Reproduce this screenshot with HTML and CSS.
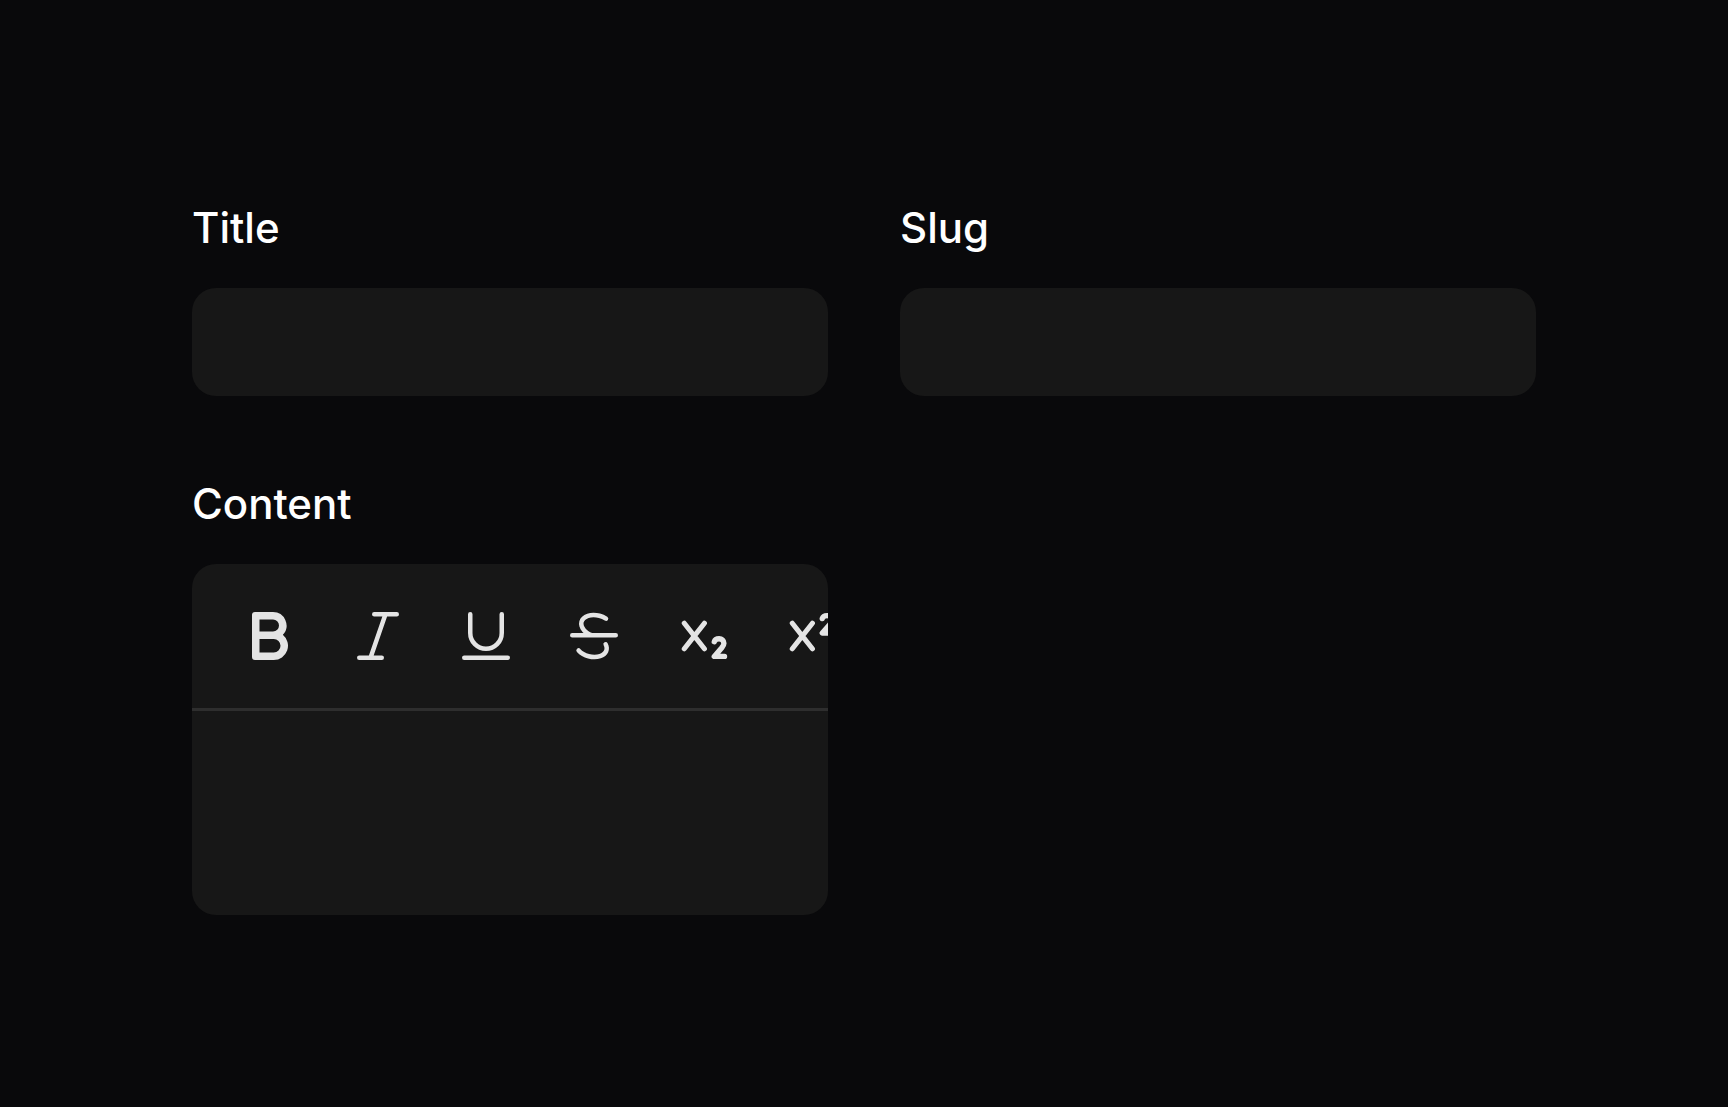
FILE: index.html
```html
<!DOCTYPE html>
<html lang="en">
<head>
<meta charset="utf-8">
<title>Post form</title>
<link rel="stylesheet" href="styles.css">
</head>
<body>
<form class="form">
  <div class="field">
    <label class="label" for="title">Title</label>
    <input class="input" id="title" type="text">
  </div>
  <div class="field">
    <label class="label" for="slug">Slug</label>
    <input class="input" id="slug" type="text">
  </div>
  <div class="field">
    <label class="label" for="content">Content</label>
    <div class="editor">
      <div class="toolbar" role="toolbar" aria-label="Formatting">
        <button class="tool" type="button" aria-label="Bold"><svg class="icon" viewBox="0 0 20 20" fill="currentColor"><path fill-rule="evenodd" d="M4 3a1 1 0 0 1 1-1h6a4.5 4.5 0 0 1 3.274 7.587A4.75 4.75 0 0 1 11.25 18H5a1 1 0 0 1-1-1V3Zm2.5 5.5v-4H11a2 2 0 1 1 0 4H6.5Zm0 2.5v4.5h4.75a2.25 2.25 0 0 0 0-4.5H6.5Z"/></svg></button>
        <button class="tool" type="button" aria-label="Italic"><svg class="icon" viewBox="0 0 20 20" fill="currentColor"><path d="M8 2.75A.75.75 0 0 1 8.75 2h7.5a.75.75 0 0 1 0 1.5h-3.215l-4.483 13h2.698a.75.75 0 0 1 0 1.5h-7.5a.75.75 0 0 1 0-1.5h3.215l4.483-13H8.75A.75.75 0 0 1 8 2.75Z"/></svg></button>
        <button class="tool" type="button" aria-label="Underline"><svg class="icon" viewBox="0 0 20 20" fill="currentColor"><path d="M4.75 2a.75.75 0 0 1 .75.75V9a4.5 4.5 0 1 0 9 0V2.75a.75.75 0 0 1 1.5 0V9A6 6 0 0 1 4 9V2.75A.75.75 0 0 1 4.75 2ZM2 17.25a.75.75 0 0 1 .75-.75h14.5a.75.75 0 0 1 0 1.5H2.75a.75.75 0 0 1-.75-.75Z"/></svg></button>
        <button class="tool" type="button" aria-label="Strikethrough"><svg class="icon" viewBox="0 0 20 20" fill="currentColor"><path d="M11.617 3.963c-1.186-.318-2.418-.323-3.416.015-.992.336-1.49.91-1.642 1.476-.152.566-.007 1.313.684 2.1.528.6 1.273 1.1 2.128 1.446h7.879a.75.75 0 0 1 0 1.5H2.75a.75.75 0 0 1 0-1.5h3.813a5.976 5.976 0 0 1-.447-.456C5.18 7.479 4.798 6.231 5.11 5.066c.312-1.164 1.268-2.055 2.61-2.509 1.336-.451 2.877-.42 4.286-.043.856.23 1.684.592 2.409 1.074a.75.75 0 1 1-.83 1.25 6.723 6.723 0 0 0-1.968-.875Zm1.909 8.123a.75.75 0 0 1 1.015.309c.53.99.607 2.062.18 3.01-.421.94-1.289 1.648-2.441 2.038-1.336.452-2.877.42-4.286.043-1.409-.377-2.759-1.121-3.69-2.18a.75.75 0 1 1 1.127-.99c.696.791 1.765 1.403 2.952 1.721 1.186.318 2.418.323 3.416-.015.853-.288 1.34-.756 1.555-1.232.21-.467.205-1.049-.136-1.69a.75.75 0 0 1 .308-1.014Z"/></svg></button>
        <button class="tool" type="button" aria-label="Subscript"><svg class="icon" viewBox="0 0 20 20" fill="none" stroke="currentColor" stroke-linecap="round" stroke-linejoin="round"><path stroke-width="1.7" d="M4.1 5.75l6.7 8.5m0-8.5l-6.7 8.5"/><path stroke-width="1.8" d="M14.1 11.9c.2-.7.9-1 1.6-1 .9 0 1.6.6 1.6 1.5 0 .6-.3 1-.7 1.5L14.1 16.8h3.4"/></svg></button>
        <button class="tool" type="button" aria-label="Superscript"><svg class="icon" viewBox="0 0 20 20" fill="none" stroke="currentColor" stroke-linecap="round" stroke-linejoin="round"><path stroke-width="1.7" d="M4.1 5.75l6.7 8.5m0-8.5l-6.7 8.5"/><path stroke-width="1.8" d="M14.1 4.2c.2-.7.9-1 1.6-1 .9 0 1.6.6 1.6 1.5 0 .6-.3 1-.7 1.5L14.1 9h3.4"/></svg></button>
      </div>
      <textarea class="content" id="content"></textarea>
    </div>
  </div>
</form>
</body>
</html>
```
FILE: styles.css
```css
* {
  box-sizing: border-box;
}

body {
  margin: 0;
  background: #09090b;
  color: #fff;
  font-family: Inter, sans-serif;
}

.form {
  display: grid;
  grid-template-columns: 1fr 1fr;
  gap: 72px;
  padding: 192px;
}

.field {
  display: flex;
  flex-direction: column;
  gap: 24px;
  min-width: 0;
}

.label {
  font-size: 42px;
  font-weight: 500;
  line-height: 72px;
}

.input,
.content {
  width: 100%;
  border: 0;
  outline: 0;
  color: #fff;
  font: 42px/72px Inter, sans-serif;
}

.input {
  height: 108px;
  padding: 18px 36px;
  border-radius: 24px;
  background: #171717;
}

.editor {
  overflow: hidden;
  border-radius: 24px;
  background: #171717;
}

.toolbar {
  display: flex;
  gap: 12px;
  padding: 24px 30px;
  border-bottom: 3px solid #2e2e2e;
  overflow: hidden;
}

.tool {
  display: flex;
  flex: none;
  align-items: center;
  justify-content: center;
  width: 96px;
  height: 96px;
  padding: 0;
  border: 0;
  border-radius: 24px;
  background: none;
  color: #e4e4e4;
}

.icon {
  width: 60px;
  height: 60px;
}

.content {
  display: block;
  height: 204px;
  padding: 36px 60px;
  background: none;
  resize: none;
}
```
